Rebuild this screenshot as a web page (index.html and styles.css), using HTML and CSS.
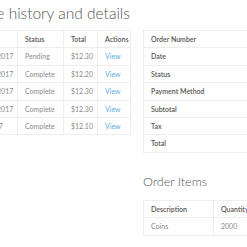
FILE: index.html
```html
<!DOCTYPE html>
<html lang="en">
<head>
  <meta charset="UTF-8" />
  <meta name="viewport" content="width=device-width, initial-scale=1" />
  <title>Purchase history and details</title>
  <link rel="stylesheet" href="styles.css">
</head>
<body>
  <div class="container">
    <h1 class="page-title">Purchase history and details</h1>
    <div class="row">
      <div class="col-history">
        <table class="table orders">
          <colgroup>
            <col class="c-date" />
            <col class="c-status" />
            <col class="c-total" />
            <col class="c-actions" />
          </colgroup>
          <thead>
            <tr><th>Date</th><th>Status</th><th>Total</th><th>Actions</th></tr>
          </thead>
          <tbody>
            <tr><td>December 28, 2017</td><td>Pending</td><td>$12.30</td><td><a href="#">View</a></td></tr>
            <tr><td>December 21, 2017</td><td>Complete</td><td>$12.20</td><td><a href="#">View</a></td></tr>
            <tr><td>December 14, 2017</td><td>Complete</td><td>$12.30</td><td><a href="#">View</a></td></tr>
            <tr><td>December 07, 2017</td><td>Complete</td><td>$12.30</td><td><a href="#">View</a></td></tr>
            <tr><td>October 1, 2017</td><td>Complete</td><td>$12.10</td><td><a href="#">View</a></td></tr>
          </tbody>
        </table>
      </div>
      <div class="col-details">
        <table class="table details">
          <tbody>
            <tr><th>Order Number</th><td></td></tr>
            <tr><th>Date</th><td></td></tr>
            <tr><th>Status</th><td></td></tr>
            <tr><th>Payment Method</th><td></td></tr>
            <tr><th>Subtotal</th><td></td></tr>
            <tr><th>Tax</th><td></td></tr>
            <tr><th>Total</th><td></td></tr>
          </tbody>
        </table>

        <h2 class="section-title">Order Items</h2>
        <table class="table items">
          <thead>
            <tr><th>Description</th><th>Quantity</th><th>Price</th></tr>
          </thead>
          <tbody>
            <tr><td>Coins</td><td>2000</td><td>$12.00</td></tr>
          </tbody>
        </table>
      </div>
    </div>
  </div>
</body>
</html>
```

FILE: styles.css
```css
/* Basic Reset */
* {
  box-sizing: border-box;
  margin: 0;
  padding: 0;
}
body {
  font-family: Lato, "Open Sans", sans-serif;
  background-color: #fff;
  color: #777;
  overflow: hidden;
}
.container {
  margin-left: -56px;
  width: 360px;
}
.page-title {
  font-size: 15.5px;
  font-weight: 300;
  color: #555;
  line-height: 20px;
  padding-top: 3px;
  margin-bottom: 7px;
}
.row {
  display: flex;
  gap: 13px;
  align-items: flex-start;
}
.col-history {
  width: 186px;
}
.col-details {
  width: 160px;
}
.table {
  width: 100%;
  border-collapse: collapse;
  table-layout: fixed;
  font-size: 7px;
  line-height: 8.4px;
}
.table th,
.table td {
  border: 1px solid #eee;
  padding: 4px 7px;
  text-align: left;
  white-space: nowrap;
  overflow: hidden;
}
.table th {
  color: #555;
  font-weight: 600;
}
.table td {
  color: #8a8a8a;
}
.table a {
  color: #5aaee3;
  text-decoration: none;
}
.orders .c-date { width: 73px; }
.orders .c-status { width: 46px; }
.orders .c-total { width: 34px; }
.orders .c-actions { width: 33px; }
.details th {
  width: 110px;
}
.section-title {
  font-size: 12.5px;
  font-weight: 300;
  color: #555;
  line-height: 16px;
  margin: 21px 0 10px;
}
.items th:first-child {
  width: 70px;
}
```
